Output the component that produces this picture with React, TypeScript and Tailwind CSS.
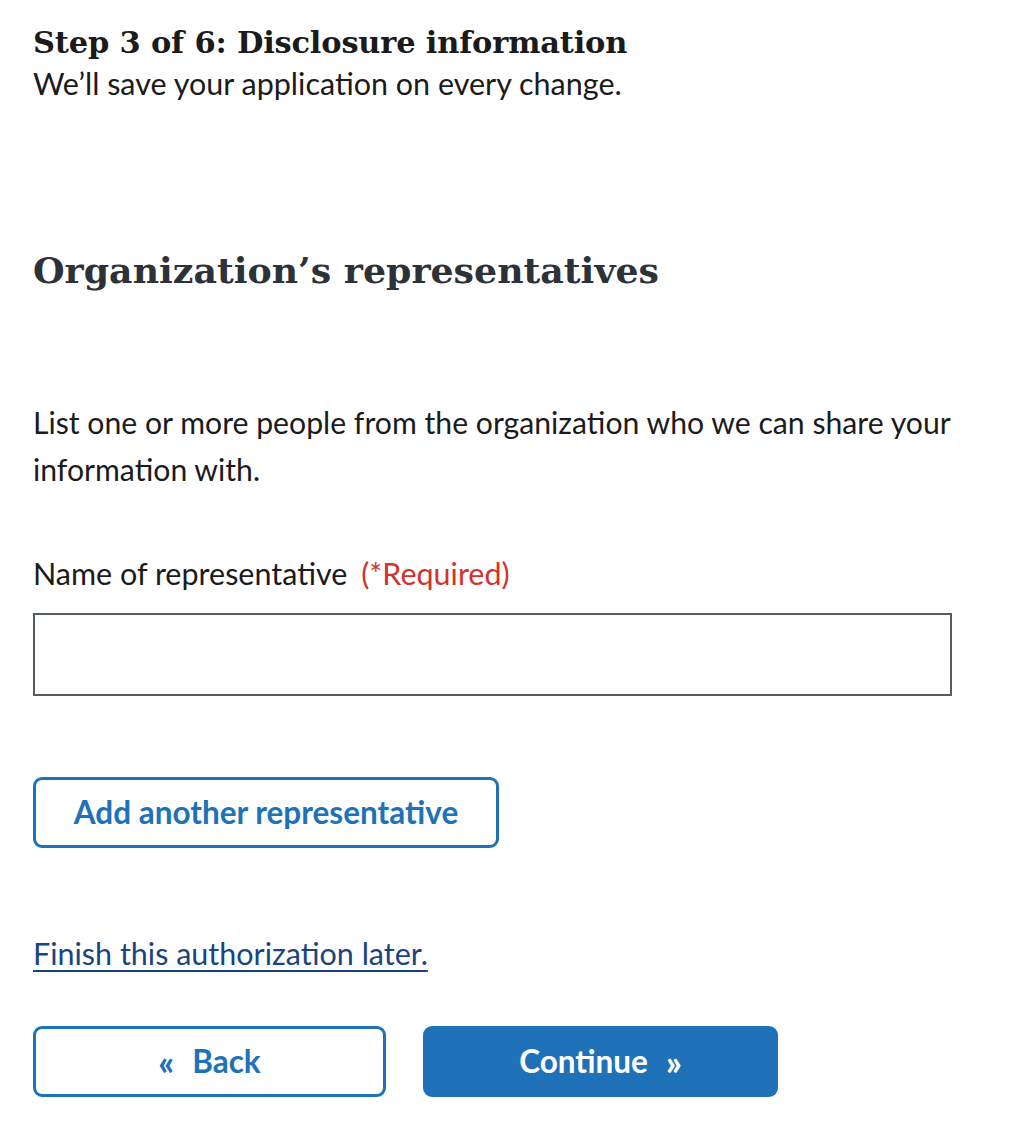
import React from 'react';

const serif = 'font-["DejaVu_Serif",serif]';
const sans = 'font-["Lato","Open_Sans",sans-serif]';

export default function App() {
  return (
    <div className={`min-h-screen bg-white px-[33px] pt-[22px] text-[#1b1b1b] ${sans}`}>
      <header>
        <h2 className={`${serif} text-[30.5px] font-bold leading-[40px] tracking-[-0.2px] text-[#1b1b1b]`}>
          Step 3 of 6: Disclosure information
        </h2>
        <p className="text-[30.5px] leading-[42px]">We’ll save your application on every change.</p>
      </header>

      <h1 className={`${serif} mt-[142px] text-[36.3px] font-bold leading-[50px] text-[#2d3238]`}>
        Organization’s representatives
      </h1>

      <p className="mt-[103px] w-[930px] text-[30.2px] leading-[47px]">
        List one or more people from the organization who we can share your information with.
      </p>

      <form className="mt-[60px]">
        <label htmlFor="rep-name" className="block text-[30.5px] leading-[40px]">
          Name of representative <span className="ml-[6px] text-[#d0342c]">(*Required)</span>
        </label>
        <input
          id="rep-name"
          type="text"
          className="mt-[20px] block h-[83px] w-[919px] border-2 border-[#565c65] bg-white px-4 text-[30px] outline-none"
        />

        <button
          type="button"
          className="mt-[81px] flex h-[71px] w-[466px] items-center justify-center rounded-[9px] border-[3px] border-[#2072b8] bg-white text-[31.5px] font-bold text-[#2072b8]"
        >
          Add another representative
        </button>

        <div className="mt-[85px]">
          <a href="#" className="text-[30.5px] leading-[40px] text-[#1a4480] underline decoration-2 underline-offset-[5px]">
            Finish this authorization later.
          </a>
        </div>

        <div className="mt-[53px] flex gap-[37px]">
          <button
            type="button"
            className="flex h-[71px] w-[353px] items-center justify-center gap-[18px] rounded-[9px] border-[3px] border-[#2072b8] bg-white text-[31.5px] font-bold text-[#2072b8]"
          >
            <span className="text-[34px] font-black">«</span>
            <span>Back</span>
          </button>
          <button
            type="button"
            className="flex h-[71px] w-[355px] items-center justify-center gap-[18px] rounded-[9px] bg-[#2072b8] text-[31.5px] font-bold text-white"
          >
            <span>Continue</span>
            <span className="text-[34px] font-black">»</span>
          </button>
        </div>
      </form>
    </div>
  );
}
